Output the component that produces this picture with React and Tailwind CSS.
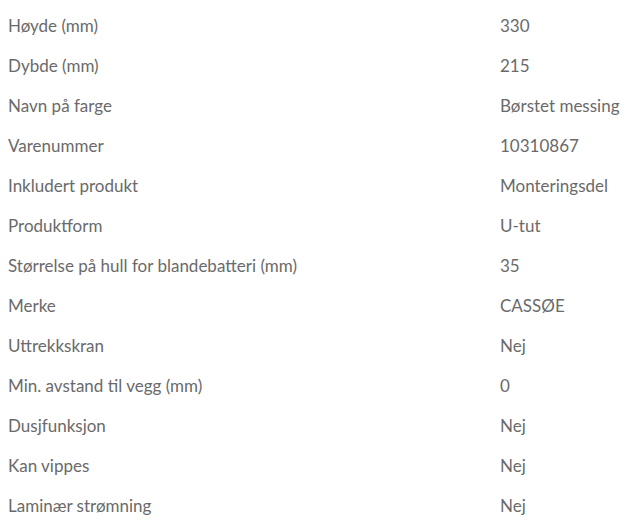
import React from "react";

const rows = [
  ["Høyde (mm)", "330"],
  ["Dybde (mm)", "215"],
  ["Navn på farge", "Børstet messing"],
  ["Varenummer", "10310867"],
  ["Inkludert produkt", "Monteringsdel"],
  ["Produktform", "U-tut"],
  ["Størrelse på hull for blandebatteri (mm)", "35"],
  ["Merke", "CASSØE"],
  ["Uttrekkskran", "Nej"],
  ["Min. avstand til vegg (mm)", "0"],
  ["Dusjfunksjon", "Nej"],
  ["Kan vippes", "Nej"],
  ["Laminær strømning", "Nej"],
];

export default function App() {
  return (
    <div className="w-[631px] h-[524px] bg-white pt-[6px] text-[17px] text-[#6a6a6a]" style={{ fontFamily: "Lato, 'Noto Sans', sans-serif" }}>
      {rows.map(([k, v]) => (
        <div key={k} className="flex h-[40px] items-center">
          <div className="w-[500px] pl-[8px]">{k}</div>
          <div className="flex-1">{v}</div>
        </div>
      ))}
    </div>
  );
}
